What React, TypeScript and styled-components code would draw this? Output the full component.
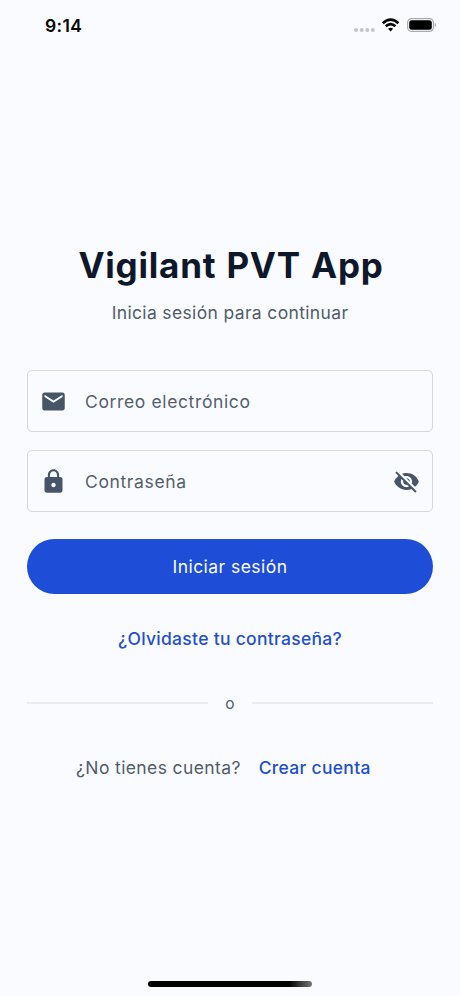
import React from "react";
import styled, { createGlobalStyle } from "styled-components";
import { MdEmail, MdLock, MdVisibilityOff } from "react-icons/md";

const GlobalStyle = createGlobalStyle`
  * { box-sizing: border-box; }
  body { margin: 0; background: #f9fbfe; }
  input::placeholder { color: #555f6e; opacity: 1; }
`;

const Screen = styled.div`
  display: flex;
  flex-direction: column;
  width: 460px;
  height: 996px;
  background: #f9fbfe;
  color: #525c6b;
  font-family: Inter, "Liberation Sans", sans-serif;
  overflow: hidden;
`;

const StatusBar = styled.header`
  display: flex;
  justify-content: space-between;
  align-items: center;
  height: 50px;
  padding: 0 24px 0 45px;
  color: #050506;
`;

const Time = styled.time`
  font-size: 17.5px;
  font-weight: 600;
  line-height: 22px;
  letter-spacing: 0.4px;
  padding-top: 1px;
`;

const StatusIcons = styled.svg`
  display: block;
  width: 82px;
  height: 16px;
`;

const Main = styled.main`
  flex: 1;
  display: flex;
  flex-direction: column;
  padding: 193px 27px 0;
`;

const Title = styled.h1`
  margin: 0;
  padding-left: 2px;
  text-align: center;
  font-size: 35px;
  line-height: 44px;
  font-weight: 700;
  letter-spacing: 0.8px;
  word-spacing: 0.9px;
  color: #0f172a;
`;

const Subtitle = styled.p`
  margin: 14px 0 0;
  text-align: center;
  font-size: 17.5px;
  line-height: 24px;
  letter-spacing: 0.35px;
`;

const Form = styled.form`
  display: flex;
  flex-direction: column;
  gap: 18px;
  margin-top: 45px;
`;

const Field = styled.label`
  display: flex;
  align-items: center;
  height: 62px;
  padding: 0 12px;
  border: 1px solid #d5d7dc;
  border-radius: 5px;
  color: #475569;

  svg { flex: none; width: 27px; height: 27px; }
`;

const Input = styled.input`
  flex: 1;
  min-width: 0;
  margin-left: 18px;
  padding: 2px 0 0;
  border: 0;
  outline: 0;
  background: transparent;
  font: 400 17.5px/24px Inter, "Liberation Sans", sans-serif;
  letter-spacing: 0.63px;
`;

const IconButton = styled.button`
  display: flex;
  padding: 0;
  border: 0;
  background: transparent;
  color: inherit;
`;

const Submit = styled.button`
  height: 55px;
  margin-top: 9px;
  padding: 0;
  border: 0;
  border-radius: 28px;
  background: #1e4dd8;
  color: #fbfcff;
  font: 400 17.5px/24px Inter, "Liberation Sans", sans-serif;
  letter-spacing: 0.45px;
`;

const Link = styled.a`
  color: #2450c8;
  font-size: 17.5px;
  line-height: 24px;
  font-weight: 500;
  letter-spacing: 0.29px;
`;

const Forgot = styled.div`
  margin-top: 33px;
  text-align: center;
  line-height: 24px;
`;

const Divider = styled.div`
  display: flex;
  align-items: center;
  gap: 18px;
  height: 20px;
  margin-top: 42px;
`;

const Rule = styled.span`
  flex: 1;
  height: 2px;
  background: #e9ebee;
`;

const Or = styled.span`
  font-size: 15.5px;
  line-height: 20px;
  width: 8px;
  display: flex;
  justify-content: center;
  padding-top: 2px;
`;

const SignUp = styled.div`
  display: flex;
  gap: 18px;
  margin: 43px 0 0 49px;
  font-size: 17.5px;
  line-height: 24px;
  letter-spacing: 0.38px;
`;

const HomeBar = styled.div`
  width: 164px;
  height: 6px;
  margin: 0 auto 9px;
  border-radius: 3px;
  background: linear-gradient(90deg, #000 86%, #777 100%);
`;

export default function App() {
  return (
    <Screen>
      <GlobalStyle />
      <StatusBar>
        <Time>9:14</Time>
        <StatusIcons viewBox="0 0 82 16" aria-hidden="true">
          <g fill="#c5c6c9">
            <circle cx="2" cy="13" r="2" />
            <circle cx="7.7" cy="13" r="2" />
            <circle cx="13.3" cy="13" r="2" />
            <circle cx="18.8" cy="13" r="2" />
          </g>
          <g fill="none" stroke="#050506" strokeWidth="2.6">
            <path d="M28.8 6.3Q36.6 -0.9 44.4 6.3" />
            <path d="M31.7 9.3Q36.6 5 41.5 9.3" />
          </g>
          <path d="M34.1 11.8Q36.6 9.8 39.1 11.8L36.6 14.4Z" fill="#050506" />
          <rect x="53.6" y="1.6" width="25.8" height="12.8" rx="4" fill="none" stroke="#aaabae" strokeWidth="1.2" />
          <rect x="55.2" y="3.2" width="22.6" height="9.6" rx="2.5" fill="#000" />
          <path d="M80.8 5.8Q83 8 80.8 10.2Z" fill="#8b8c90" />
        </StatusIcons>
      </StatusBar>
      <Main>
        <Title>Vigilant PVT App</Title>
        <Subtitle>Inicia sesión para continuar</Subtitle>
        <Form onSubmit={(e) => e.preventDefault()}>
          <Field>
            <MdEmail />
            <Input type="email" placeholder="Correo electrónico" />
          </Field>
          <Field>
            <MdLock />
            <Input type="password" placeholder="Contraseña" />
            <IconButton type="button" aria-label="Mostrar contraseña">
              <MdVisibilityOff />
            </IconButton>
          </Field>
          <Submit type="submit">Iniciar sesión</Submit>
        </Form>
        <Forgot>
          <Link>¿Olvidaste tu contraseña?</Link>
        </Forgot>
        <Divider>
          <Rule />
          <Or>o</Or>
          <Rule />
        </Divider>
        <SignUp>
          <span>¿No tienes cuenta?</span>
          <Link>Crear cuenta</Link>
        </SignUp>
      </Main>
      <HomeBar />
    </Screen>
  );
}
